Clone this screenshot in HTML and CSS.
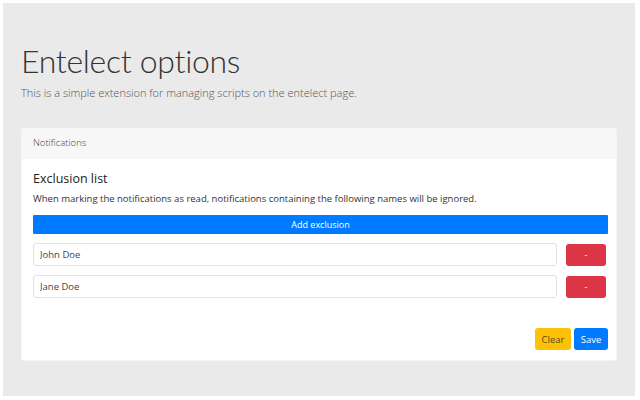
FILE: index.html
```html
<!DOCTYPE html>
<html>
<head>
<meta charset="utf-8">
<link rel="stylesheet" href="styles.css">
</head>
<body>
<div class="jumbotron">
  <h1 class="title">Entelect options</h1>
  <p class="lead">This is a simple extension for managing scripts on the entelect page.</p>
  <div class="card">
    <div class="card-header">Notifications</div>
    <div class="card-body">
      <h5 class="card-title">Exclusion list</h5>
      <p class="card-text">When marking the notifications as read, notifications containing the following names will be ignored.</p>
      <button class="btn btn-primary btn-block">Add exclusion</button>
      <div class="row">
        <input class="form-control" type="text" value="John Doe">
        <button class="btn btn-danger btn-remove">-</button>
      </div>
      <div class="row">
        <input class="form-control" type="text" value="Jane Doe">
        <button class="btn btn-danger btn-remove">-</button>
      </div>
      <div class="actions">
        <button class="btn btn-warning">Clear</button>
        <button class="btn btn-primary">Save</button>
      </div>
    </div>
  </div>
</div>
</body>
</html>
```
FILE: styles.css
```css
* { box-sizing: border-box; }
html, body { margin: 0; padding: 0; background: #fff; }
body {
  padding: 3px 5px 4px 3px;
  font-family: "Open Sans", "Noto Sans", sans-serif;
  color: #212529;
}
.jumbotron {
  background: #eaeaea;
  height: 393px;
  padding: 38px 18px 0 18px;
}
.title {
  font-family: Lato, "Open Sans", sans-serif;
  font-weight: 300;
  font-size: 32px;
  letter-spacing: -0.3px;
  line-height: 40px;
  margin: 0;
  color: #333;
}
.lead {
  font-family: "Open Sans", sans-serif;
  font-weight: 300;
  font-size: 11px;
  line-height: 16px;
  margin: 4px 0 0 0;
  color: #555;
}
.card {
  margin-top: 27px;
  background: #fff;
  border: 1px solid rgba(0,0,0,0.04);
  border-radius: 3px;
  width: 596px;
  height: 233px;
}
.card-header {
  background: #f7f7f7;
  height: 30px;
  padding: 0 11px;
  font-size: 9.5px;
  line-height: 28px;
  color: #444;
  font-weight: 300;
}
.card-body {
  padding: 12px 11px 0 11px;
}
.card-title {
  margin: 0;
  font-size: 12.5px;
  line-height: 16px;
  font-weight: 500;
  color: #222;
}
.card-text {
  margin: 5px 0 0 0;
  font-size: 9.5px;
  line-height: 14px;
  color: #333;
}
.btn {
  font-family: "Open Sans", sans-serif;
  border: 0;
  border-radius: 3px;
  font-size: 9px;
  color: #fff;
  padding: 0 5px;
}
.btn-primary { background: #007bff; }
.btn-danger { background: #dc3545; }
.btn-warning { background: #ffc107; color: #5a4a10; }
.btn-block {
  display: block;
  width: 575px;
  height: 19px;
  margin-top: 9px;
  border-radius: 1px;
  line-height: 19px;
}
.row {
  display: flex;
  align-items: center;
  margin-top: 9px;
  width: 575px;
}
.form-control {
  width: 524px;
  height: 23px;
  border: 1px solid #e2e2e2;
  border-radius: 3px;
  font-family: "Open Sans", sans-serif;
  font-size: 9.5px;
  color: #444;
  padding: 0 6px;
  background: #fff;
}
.btn-remove {
  margin-left: 9px;
  width: 40px;
  height: 22px;
}
.actions {
  display: flex;
  justify-content: flex-end;
  gap: 3px;
  margin-top: 30px;
  width: 575px;
}
.actions .btn {
  height: 22px;
  font-size: 9.5px;
  padding: 0 6px;
}
.actions .btn-warning { width: 36px; }
.actions .btn-primary { width: 34px; }
```
